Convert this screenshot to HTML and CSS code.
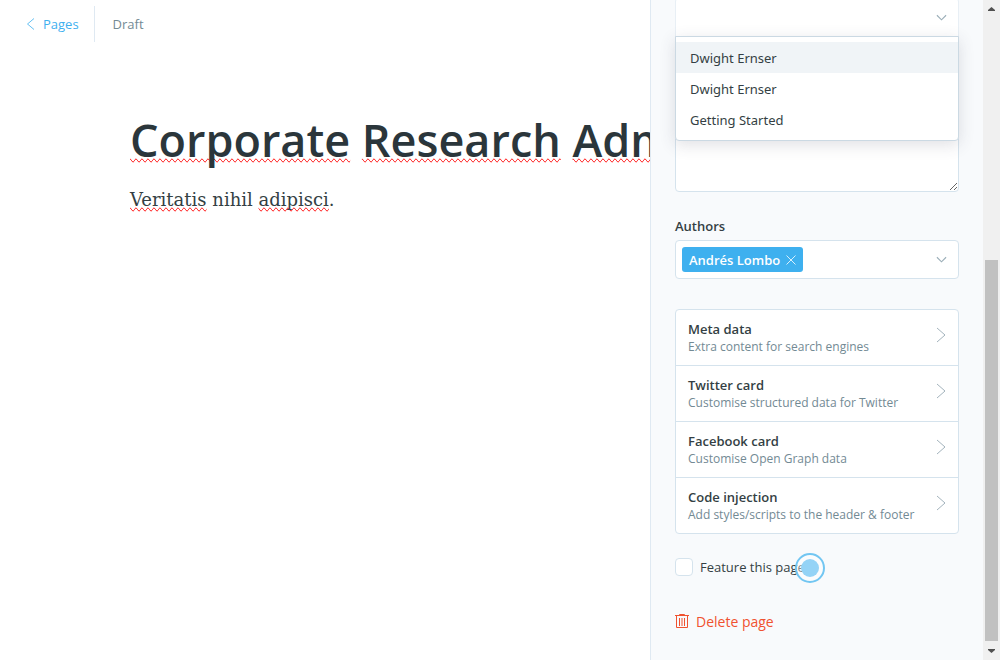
FILE: index.html
```html
<!DOCTYPE html>
<html lang="en">
<head>
<meta charset="utf-8">
<title>Page editor</title>
<link rel="stylesheet" href="styles.css">
</head>
<body>
<div class="app">
  <main class="editor">
    <header class="topbar">
      <a class="back" href="#"><svg class="back-icon" viewBox="0 0 8 12"><path d="M7.500 .5 1 6l6.500 5.500"/></svg>Pages</a>
      <span class="status">Draft</span>
    </header>
    <article class="document">
      <h1 class="title"><span class="misspelt">Corporate</span> <span class="misspelt">Research</span> <span class="misspelt">Administrator</span></h1>
      <p class="copy"><span class="misspelt">Veritatis</span> nihil <span class="misspelt">adipisci</span>.</p>
    </article>
  </main>
  <aside class="settings">
    <div class="picker">
      <button class="field trigger" type="button" aria-label="Choose a tag" aria-expanded="true"><svg class="chevron" viewBox="0 0 12 8"><path d="m1 1 5 5 5-5"/></svg></button>
      <div class="menu" role="listbox">
        <button class="option active" type="button" role="option" aria-selected="true">Dwight Ernser</button>
        <button class="option" type="button" role="option">Dwight Ernser</button>
        <button class="option" type="button" role="option">Getting Started</button>
      </div>
    </div>
    <textarea class="excerpt" aria-label="Excerpt"></textarea>
    <div class="label" id="authors">Authors</div>
    <div class="field" role="group" aria-labelledby="authors">
      <button class="token" type="button">Andrés Lombo<svg class="remove" viewBox="0 0 10 10"><path d="m.5 .5 9 9m0-9-9 9"/></svg></button>
      <svg class="chevron" viewBox="0 0 12 8"><path d="m1 1 5 5 5-5"/></svg>
    </div>
    <nav class="links">
      <button class="link" type="button"><span class="link-text"><b class="link-name">Meta data</b><span class="hint">Extra content for search engines</span></span><svg class="arrow" viewBox="0 0 10 16"><path d="m1 1 8 7-8 7"/></svg></button>
      <button class="link" type="button"><span class="link-text"><b class="link-name">Twitter card</b><span class="hint">Customise structured data for Twitter</span></span><svg class="arrow" viewBox="0 0 10 16"><path d="m1 1 8 7-8 7"/></svg></button>
      <button class="link" type="button"><span class="link-text"><b class="link-name">Facebook card</b><span class="hint">Customise Open Graph data</span></span><svg class="arrow" viewBox="0 0 10 16"><path d="m1 1 8 7-8 7"/></svg></button>
      <button class="link" type="button"><span class="link-text"><b class="link-name">Code injection</b><span class="hint">Add styles/scripts to the header &amp; footer</span></span><svg class="arrow" viewBox="0 0 10 16"><path d="m1 1 8 7-8 7"/></svg></button>
    </nav>
    <div class="feature">
      <input class="check" type="checkbox" id="feature"><label for="feature">Feature this page</label>
      <svg class="pointer" viewBox="0 0 30 30"><circle class="pointer-ring" cx="15" cy="15" r="14"/><circle class="pointer-dot" cx="15" cy="15" r="9"/></svg>
    </div>
    <button class="delete" type="button"><svg class="trash" viewBox="0 0 14 15"><path d="M0 1.500h14M4.500 1.500V.5h5v1M1.500 1.500v12h11v-12M4.500 4v8M7 4v8M9.500 4v8"/></svg>Delete page</button>
  </aside>
  <div class="scrollbar" aria-hidden="true">
    <svg class="scroll-arrow" viewBox="0 0 17 17"><path d="M5 11h7v-1L8.500 7 5 10z"/></svg>
    <div class="track"><div class="thumb"></div></div>
    <svg class="scroll-arrow" viewBox="0 0 17 17"><path d="M5 6h7v1l-3.500 3L5 7z"/></svg>
  </div>
</div>
</body>
</html>
```
FILE: styles.css
```css
* { box-sizing: border-box; }
body {
  margin: 0;
  color: #343f44;
  background: #fff;
  font: 13px/18px "Open Sans", "Noto Sans", sans-serif;
}
button {
  margin: 0;
  padding: 0;
  border: 0;
  background: none;
  color: inherit;
  font: inherit;
  text-align: left;
  cursor: pointer;
}
svg { flex: none; fill: none; }
.app { display: flex; height: 100vh; overflow: hidden; }

.editor { flex: 1; min-width: 0; overflow: hidden; }
.topbar { display: flex; align-items: center; padding: 6px 26px; height: 48px; }
.back {
  display: flex;
  align-items: center;
  gap: 8px;
  height: 36px;
  padding-right: 15px;
  border-right: 1px solid #dfe9f2;
  color: #3eb0ef;
  text-decoration: none;
}
.back-icon { width: 9px; height: 12px; stroke: #3eb0ef; stroke-width: .8; }
.status { padding-left: 18px; color: #738a94; }
.document { padding: 62px 0 0 130px; white-space: nowrap; }
.title { margin: 0; color: #2b363b; font-size: 45px; line-height: 60px; font-weight: 600; }
.copy { margin: 14px 0 0; font: 18px/32px "DejaVu Serif", serif; }
.misspelt { text-decoration-line: spelling-error; }

.settings {
  flex: 0 0 333px;
  padding: 0 24px;
  border-left: 1px solid #dfe9f2;
  background: #f8fafc;
  overflow: hidden;
}
.picker { position: relative; margin-top: -2px; }
.field {
  display: flex;
  align-items: center;
  justify-content: space-between;
  width: 100%;
  height: 39px;
  padding: 0 11px 0 6px;
  border: 1px solid #d5e3ed;
  border-radius: 4px;
  background: #fff;
}
.trigger { justify-content: flex-end; border-color: #e8eff5; border-bottom-color: #cfdce6; border-radius: 4px 4px 0 0; }
.chevron { width: 11px; height: 8px; stroke: #9baeb8; stroke-width: 1.2; }
.menu {
  position: absolute;
  top: 38px;
  left: 0;
  right: 0;
  padding: 5px 0;
  border: 1px solid #cbd9e3;
  border-radius: 0 0 4px 4px;
  background: #fff;
  box-shadow: 0 4px 16px rgba(60, 60, 90, .16);
}
.option { display: block; width: 100%; padding: 7px 14px 6px; font-family: "Noto Sans", sans-serif; }
.active { background: #f0f4f7; }
.excerpt {
  display: block;
  width: 100%;
  height: 106px;
  margin-top: 49px;
  border: 1px solid #d5e3ed;
  border-radius: 4px;
  background: #fff;
  resize: vertical;
}
.label { margin: 25px 0 5px; font-weight: 600; }
.token {
  display: flex;
  align-items: center;
  gap: 6px;
  height: 25px;
  padding: 0 7px;
  border-radius: 3px;
  background: #3eb0ef;
  color: #fff;
  font-weight: 600;
}
.remove { width: 10px; height: 10px; stroke: #fff; stroke-width: .8; }
.links {
  margin-top: 30px;
  border: 1px solid #d5e3ed;
  border-radius: 4px;
  background: #fff;
}
.link {
  display: flex;
  align-items: center;
  justify-content: space-between;
  width: 100%;
  padding: 10px 12px 9px;
}
.link + .link { border-top: 1px solid #d5e3ed; }
.link-text, .link-name, .hint { display: block; }
.link-name { font-weight: 600; }
.hint { color: #738a94; font-size: 12px; }
.arrow { width: 10px; height: 16px; margin-bottom: 6px; stroke: #8ba0ab; stroke-width: .8; }
.feature { position: relative; display: flex; align-items: center; gap: 7px; margin-top: 24px; }
.check {
  appearance: none;
  width: 18px;
  height: 18px;
  margin: 0;
  border: 1px solid #d5e3ed;
  border-radius: 4px;
  background: #fff;
}
.pointer { position: absolute; left: 120px; top: -5px; width: 30px; height: 30px; }
.pointer-ring { fill: rgba(255, 255, 255, .4); stroke: #72c6f2; stroke-width: 2; }
.pointer-dot { fill: #94d3f6; }
.delete { display: flex; align-items: center; gap: 7px; margin-top: 37px; color: #f05230; font-size: 14px; }
.trash { width: 14px; height: 15px; margin-bottom: 2px; stroke: #f05230; }

.scrollbar { display: flex; flex-direction: column; flex: 0 0 17px; background: #f0f0f0; }
.scroll-arrow { width: 17px; height: 17px; fill: #505050; }
.track { display: flex; align-items: flex-end; flex: 1; padding: 0 2px 2px; }
.thumb { width: 100%; height: 61%; background: #c1c1c1; }
```
